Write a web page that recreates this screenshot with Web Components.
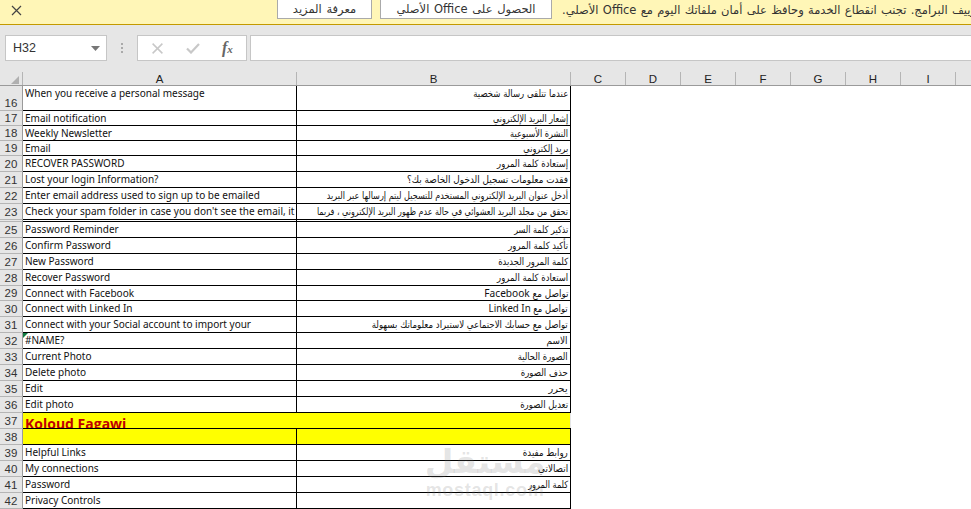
<!DOCTYPE html>
<html><head><meta charset="utf-8"><style>
html,body{margin:0;padding:0;height:509px;overflow:hidden;background:#fff}
body{font-family:"DejaVu Sans",sans-serif;position:relative}
</style></head><body>
<office-bar>
<span slot="b1">معرفة المزيد</span>
<span slot="b2">الحصول على Office الأصلي</span>
<span slot="msg">تزييف البرامج. تجنب انقطاع الخدمة وحافظ على أمان ملفاتك اليوم مع Office الأصلي.</span>
</office-bar>
<formula-bar></formula-bar>
<sheet-grid></sheet-grid>
<water-mark></water-mark>
<script>
function comp(name,html){customElements.define(name,class extends HTMLElement{constructor(){super();this.attachShadow({mode:'open'}).innerHTML=html}})}
comp('office-bar',`<style>
:host{display:flex;height:24px;background:#fff6b7;border-bottom:1px solid #c39a00;align-items:flex-start;overflow:hidden;color:#333}
.x{flex:none;width:32px;height:20px;display:flex;align-items:center;justify-content:center}
.btns{flex:none;display:flex;gap:8px;margin-left:245px;margin-top:-1px}
.btn{flex:none;box-sizing:border-box;height:20px;background:#fff;border:1px solid #aaa;display:flex;align-items:center;justify-content:center;font:11.5px "DejaVu Sans",sans-serif;white-space:nowrap;direction:rtl;word-spacing:1px}
.a{width:95px}.b{width:172px}
.m{flex:none;margin-left:10px;margin-top:1px;height:20px;white-space:nowrap;font:11.5px/18px "DejaVu Sans",sans-serif;direction:rtl;word-spacing:.6px}
</style><div class="x"><svg width="11" height="11" viewBox="0 0 11 11"><path d="M1 1L10 10M10 1L1 10" stroke="#444" stroke-width="1.2" fill="none"/></svg></div>
<div class="btns"><div class="btn a"><slot name="b1"></slot></div><div class="btn b"><slot name="b2"></slot></div></div>
<div class="m"><slot name="msg"></slot></div>`);
comp('formula-bar',`<style>
:host{display:flex;height:47px;background:#e6e6e6;box-sizing:border-box;padding:10px 0 11px 5px;align-items:stretch;font:12.5px "Liberation Sans",sans-serif}
.box{flex:none;background:#fff;border:1px solid #c6c6c6;box-sizing:border-box}
.name{width:102px;display:flex;align-items:center;justify-content:space-between;padding:0 6px 0 7px;color:#333}
.dots{flex:none;width:30px;display:flex;flex-direction:column;align-items:center;justify-content:center;gap:2px}
.dots i{width:2px;height:2px;background:#aaa;display:block}
.tools{width:110px;position:relative;display:flex;align-items:center;padding-left:14px;margin-right:3px}
.in{flex:1;border-right:0}
.fx{font:italic 16px/16px 'Liberation Serif',serif;color:#666;margin-left:22px;font-weight:bold}
.fx span{font-size:11px}
</style><div class="box name">H32<svg width="9" height="5" viewBox="0 0 9 5"><path d="M0 0H9L4.5 5Z" fill="#777"/></svg></div>
<div class="dots"><i></i><i></i><i></i></div>
<div class="box tools"><svg width="11" height="11" viewBox="0 0 11 11"><path d="M.6.6L10.4 10.4M10.4.6L.6 10.4" stroke="#c8c8c8" stroke-width="1.5" fill="none"/></svg>
<svg style="margin-left:23px" width="14" height="11" viewBox="0 0 14 11"><path d="M1 5.5L5 9.5L13 1" stroke="#c8c8c8" stroke-width="2.2" fill="none"/></svg>
<span class="fx">f<span>x</span></span></div>
<div class="box in"></div>`);
const L=t=>`<span class="l">${t}</span>`;
const rows=[
[16,25,'When you receive a personal message','عندما تتلقى رسالة شخصية',95],
[17,15,'Email notification','إشعار البريد الإلكتروني',75],
[18,15,'Weekly Newsletter','النشرة الأسبوعية',58],
[19,15,'Email','بريد إلكتروني',45],
[20,16,'RECOVER PASSWORD','إستعادة كلمة المرور',71],
[21,16,'Lost your login Information?','فقدت معلومات تسجيل الدخول الخاصة بك؟',161],
[22,16,'Enter email address used to sign up to be emailed','أدخل عنوان البريد الإلكتروني المستخدم للتسجيل ليتم إرسالها عبر البريد',241],
[23,16,"Check your spam folder in case you don't see the email, it",'تحقق من مجلد البريد العشوائي في حالة عدم ظهور البريد الإلكتروني ، فربما',251],
[24,2,'','',0],
[25,16,'Password Reminder','تذكير كلمة السر',54],
[26,16,'Confirm Password','تأكيد كلمة المرور',60],
[27,16,'New Password','كلمة المرور الجديدة',70],
[28,16,'Recover Password','استعادة كلمة المرور',71],
[29,15,'Connect with Facebook','تواصل مع  '+L('Facebook'),84],
[30,16,'Connect with Linked In','تواصل مع '+L('Linked In'),79],
[31,16,'Connect with your Social account to import your','تواصل مع حسابك الاجتماعي لاستيراد معلوماتك بسهولة',196],
[32,16,'#NAME?','الاسم',21],
[33,16,'Current Photo','الصورة الحالية',50],
[34,16,'Delete photo','حذف الصورة',47],
[35,16,'Edit','يحرر',19],
[36,16,'Edit photo','تعديل الصورة',48],
[37,16,'Koloud Fagawi','',0,'title'],
[38,16,'','',0,'yellow'],
[39,16,'Helpful Links','روابط مفيدة',45],
[40,16,'My connections','اتصالاتي',30],
[41,16,'Password','كلمة المرور',40],
[42,16,'Privacy Controls','',0]];
customElements.define('sheet-grid',class extends HTMLElement{constructor(){super();
const s=this.attachShadow({mode:'open'});
const cols='CDEFGHI'.split('');
let h=`<style>
:host{display:block;height:437px;overflow:hidden;font:10px "Noto Sans",sans-serif;color:#111}
.hd{display:flex;height:13px;background:#e6e6e6;border-bottom:1px solid #9a9a9a;font:11.5px/14px "Liberation Sans",sans-serif;color:#222}
.hd div{flex:none;text-align:center;border-right:1px solid #b5b5b5;box-sizing:border-box;height:13px}
.hd .c{width:23px;position:relative}
.r{display:flex;box-sizing:border-box;width:571px;border-bottom:1px solid #000}
.n{flex:none;width:23px;background:#e6e6e6;border-right:1px solid #9a9a9a;box-sizing:border-box;margin-bottom:-1px;border-bottom:1px solid #b5b5b5;font:11.5px/1 "Liberation Sans",sans-serif;color:#333;display:flex;align-items:flex-end;justify-content:center;padding-bottom:1px}
.a,.b{flex:none;width:274px;box-sizing:border-box;white-space:nowrap;overflow:hidden;line-height:15px;border-right:1px solid #000;padding:0 2px}
.b{direction:rtl;font:10px/15px "DejaVu Sans",sans-serif}
.b span.ar{display:inline-block;transform-origin:100% 50%}
.l{font:11.5px/14px "Noto Sans",sans-serif}
.a{position:relative}
.yellow .a,.yellow .b,.title .a,.title .b{background:#ff0}
.title .a{overflow:visible;border-right:0;font:bold 14px/18px "Open Sans",sans-serif;color:#c00000;padding-top:2px}
.title .a span{display:block;height:13px;overflow:hidden}
.title .b{border-right:1px solid #e6e6e6}
.tri{position:absolute;left:0;top:0;border-style:solid;border-width:5px 5px 0 0;border-color:#107c41 transparent transparent transparent}
</style><div class="hd"><div class="c"><svg style="position:absolute;right:3px;bottom:1px" width="8" height="8" viewBox="0 0 8 8"><path d="M8 0V8H0Z" fill="#b0b0b0"/></svg></div><div style="width:274px">A</div><div style="width:274px">B</div>`;
for(const c of cols)h+=`<div style="width:55px">${c}</div>`;
h+=`</div>`;
for(const [n,ht,a,b,w,k] of rows){
 if(n===24){h+=`<div class="r" style="height:2px"><div class="n" style="padding:0"></div><div class="a"></div><div class="b"></div></div>`;continue}
 const tri=n===32?'<i class="tri"></i>':'';
 h+=`<div class="r ${k||''}" style="height:${ht}px"><div class="n">${n}</div><div class="a">${tri}${k==='title'?`<span>${a}</span>`:a}</div><div class="b">${b?`<span class="ar" data-w="${w}">${b}</span>`:''}</div></div>`;
}
s.innerHTML=h;}
connectedCallback(){this.shadowRoot.querySelectorAll('.ar').forEach(e=>{e.style.transform=`scaleX(${(+e.dataset.w/e.getBoundingClientRect().width).toFixed(3)})`})}
});
comp('water-mark',`<style>
:host{position:absolute;left:420px;top:442px;width:130px;pointer-events:none;display:flex;flex-direction:column;align-items:center;color:rgba(120,120,120,.2)}
.t{font:bold 33px/40px "DejaVu Sans",sans-serif;direction:rtl;white-space:nowrap}
.u{font:bold 18px/16px "Liberation Sans",sans-serif;letter-spacing:.7px;white-space:nowrap}
</style><div class="t">مستقل</div><div class="u">mostaql.com</div>`);
</script>
</body></html>
